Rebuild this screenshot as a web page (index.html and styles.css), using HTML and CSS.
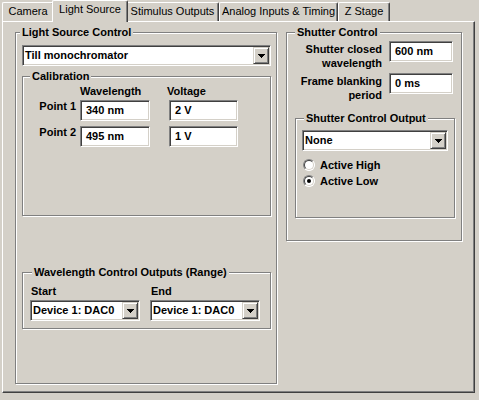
FILE: index.html
```html
<!DOCTYPE html>
<html>
<head>
<meta charset="utf-8">
<link rel="stylesheet" href="styles.css">
</head>
<body>
<div class="tabs">
  <div class="tab t-camera">Camera</div>
  <div class="tab active t-light">Light Source</div>
  <div class="tab t-stim">Stimulus Outputs</div>
  <div class="tab t-analog">Analog Inputs &amp; Timing</div>
  <div class="tab t-z">Z Stage</div>
</div>
<div class="panel">
  <fieldset class="group g-light">
    <legend class="lg-light">Light Source Control</legend>
    <div class="combo">
      <span class="combo-text">Till monochromator</span>
      <span class="combo-btn"><svg width="7" height="4" viewBox="0 0 7 4"><path d="M0 0H7V1H6V2H5V3H4V4H3V3H2V2H1V1H0Z"/></svg></span>
    </div>
    <fieldset class="group g-cal">
      <legend class="lg-cal">Calibration</legend>
      <div class="cal-head">
        <span class="cal-lab"></span>
        <span class="hdr-w">Wavelength</span>
        <span class="hdr-v">Voltage</span>
      </div>
      <div class="cal-row">
        <span class="cal-lab">Point 1</span>
        <div class="edit e-w">340 nm</div>
        <div class="edit e-v">2 V</div>
      </div>
      <div class="cal-row">
        <span class="cal-lab">Point 2</span>
        <div class="edit e-w">495 nm</div>
        <div class="edit e-v">1 V</div>
      </div>
    </fieldset>
    <fieldset class="group g-wave">
      <legend class="lg-wave">Wavelength Control Outputs (Range)</legend>
      <div class="wave-cols">
        <div class="wave-col">
          <div class="wave-lab">Start</div>
          <div class="combo">
            <span class="combo-text">Device 1: DAC0</span>
            <span class="combo-btn"><svg width="7" height="4" viewBox="0 0 7 4"><path d="M0 0H7V1H6V2H5V3H4V4H3V3H2V2H1V1H0Z"/></svg></span>
          </div>
        </div>
        <div class="wave-col">
          <div class="wave-lab">End</div>
          <div class="combo">
            <span class="combo-text">Device 1: DAC0</span>
            <span class="combo-btn"><svg width="7" height="4" viewBox="0 0 7 4"><path d="M0 0H7V1H6V2H5V3H4V4H3V3H2V2H1V1H0Z"/></svg></span>
          </div>
        </div>
      </div>
    </fieldset>
  </fieldset>

  <fieldset class="group g-shutter">
    <legend class="lg-shutter">Shutter Control</legend>
    <div class="srow">
      <div class="slabel">Shutter closed<br>wavelength</div>
      <div class="edit e-s">600 nm</div>
    </div>
    <div class="srow srow2">
      <div class="slabel">Frame blanking<br>period</div>
      <div class="edit e-s">0 ms</div>
    </div>
    <fieldset class="group g-sco">
      <legend class="lg-sco">Shutter Control Output</legend>
      <div class="combo">
        <span class="combo-text">None</span>
        <span class="combo-btn"><svg width="7" height="4" viewBox="0 0 7 4"><path d="M0 0H7V1H6V2H5V3H4V4H3V3H2V2H1V1H0Z"/></svg></span>
      </div>
      <div class="radios">
        <div class="rrow"><span class="radio"></span><span>Active High</span></div>
        <div class="rrow"><span class="radio on"></span><span>Active Low</span></div>
      </div>
    </fieldset>
  </fieldset>
</div>
</body>
</html>
```

FILE: styles.css
```css
html, body {
  margin: 0;
  padding: 0;
}
body {
  width: 479px;
  height: 400px;
  overflow: hidden;
  background: #d4d0c8;
  color: #000;
  font-family: "Liberation Sans", Arial, sans-serif;
  font-size: 11px;
  line-height: 13px;
  font-weight: bold;
}

/* Tabs */
.tabs {
  display: flex;
  align-items: flex-end;
  height: 21px;
  padding-left: 2px;
}
.tab {
  box-sizing: border-box;
  height: 19px;
  border-top: 1px solid #fff;
  border-left: 1px solid #fff;
  border-right: 1px solid #404040;
  box-shadow: inset -1px 0 #808080;
  border-radius: 2px 2px 0 0;
  text-align: center;
  padding-top: 2px;
  white-space: nowrap;
  font-weight: normal;
}
.tab.active {
  height: 22px;
  margin: 0 -2px -1px;
  position: relative;
  z-index: 1;
  background: #d4d0c8;
}
.t-camera { width: 52px; }
.t-light { width: 76px; }
.t-stim { width: 93px; }
.t-analog { width: 119px; }
.t-z { width: 52px; }

/* Panel */
.panel {
  box-sizing: border-box;
  width: 473px;
  height: 372px;
  margin-left: 2px;
  border: 1px solid;
  border-color: #fff #404040 #404040 #fff;
  box-shadow: inset -1px -1px #808080;
  padding: 4px 0 0 12px;
  display: flex;
  align-items: flex-start;
}

/* Group boxes */
.group {
  box-sizing: border-box;
  margin: 0;
  min-width: 0;
  border: 1px solid #808080;
  box-shadow: inset 1px 1px #fff, 1px 1px #fff;
  flex: none;
}
legend {
  padding: 0 2px;
  line-height: 13px;
  background: #d4d0c8;
  white-space: nowrap;
}
.g-light {
  width: 262px;
  height: 358px;
  padding: 6px 5px 0 6px;
}
.lg-light { margin-left: -2px; }

.g-light .g-cal {
  margin-top: 4px;
  height: 146px;
  padding: 2px 0 0 0;
}
.lg-cal { margin-left: 7px; }

.g-light .g-wave {
  margin-top: 50px;
  height: 63px;
  padding: 6px 0 0 7px;
}
.lg-wave { margin-left: 2px; }

.panel .g-shutter {
  margin-left: 9px;
  width: 176px;
  height: 215px;
  padding: 2px 6px 0 8px;
}
.lg-shutter { margin-left: 0; }

.g-shutter .g-sco {
  margin-top: 10px;
  height: 106px;
  padding: 5px 6px 0 6px;
}
.lg-sco { margin-left: 2px; }

/* Combo box */
.combo {
  box-sizing: border-box;
  height: 21px;
  display: flex;
  background: #fff;
  border: 1px solid;
  border-color: #808080 #fff #fff #808080;
  box-shadow: inset 1px 1px #404040, inset -1px -1px #d4d0c8;
  padding: 1px;
}
.combo-text {
  flex: 1;
  min-width: 0;
  padding-left: 1px;
  line-height: 17px;
  white-space: nowrap;
  overflow: hidden;
}
.combo-btn {
  box-sizing: border-box;
  flex: none;
  width: 16px;
  height: 17px;
  background: #d4d0c8;
  border: 1px solid;
  border-color: #d4d0c8 #404040 #404040 #d4d0c8;
  box-shadow: inset 1px 1px #fff, inset -1px -1px #808080;
  display: flex;
  align-items: center;
  justify-content: center;
  padding-top: 1px;
}
.combo-btn svg { display: block; fill: #000; }

/* Edit box */
.edit {
  box-sizing: border-box;
  height: 21px;
  background: #fff;
  border: 1px solid;
  border-color: #808080 #fff #fff #808080;
  box-shadow: inset 1px 1px #404040, inset -1px -1px #d4d0c8;
  padding-left: 5px;
  line-height: 19px;
  white-space: nowrap;
}

/* Calibration */
.cal-head, .cal-row {
  display: flex;
  align-items: flex-start;
}
.cal-head { height: 13px; margin-bottom: 2px; }
.cal-row { margin-bottom: 5px; }
.cal-lab {
  width: 53px;
  text-align: right;
  margin-right: 4px;
}
.hdr-w { width: 69px; }
.hdr-v { margin-left: 18px; }
.e-w { width: 70px; }
.e-v { width: 69px; margin-left: 19px; }

/* Wavelength outputs */
.wave-cols {
  display: flex;
  gap: 10px;
}
.wave-col { width: 110px; }
.wave-lab {
  padding-left: 1px;
  margin-bottom: 2px;
}

/* Shutter */
.srow {
  display: flex;
  align-items: flex-start;
}
.srow2 { margin-top: 3px; }
.slabel {
  width: 87px;
  text-align: right;
  line-height: 14px;
  padding-top: 1px;
  white-space: nowrap;
}
.e-s { width: 64px; margin-left: 7px; }

.radios { margin-top: 6px; }
.rrow {
  display: flex;
  align-items: center;
  gap: 5px;
  height: 16px;
  padding-left: 1px;
}
.radio {
  box-sizing: border-box;
  width: 12px;
  height: 12px;
  border-radius: 50%;
  border: 1px solid;
  border-color: #808080 #fff #fff #808080;
  background: #fff;
  position: relative;
  flex: none;
}
.radio::before {
  content: "";
  position: absolute;
  left: 0;
  top: 0;
  width: 10px;
  height: 10px;
  box-sizing: border-box;
  border-radius: 50%;
  border: 1px solid;
  border-color: #404040 #d4d0c8 #d4d0c8 #404040;
}
.radio.on::after {
  content: "";
  position: absolute;
  left: 3px;
  top: 3px;
  width: 4px;
  height: 4px;
  border-radius: 50%;
  background: #000;
}
```
